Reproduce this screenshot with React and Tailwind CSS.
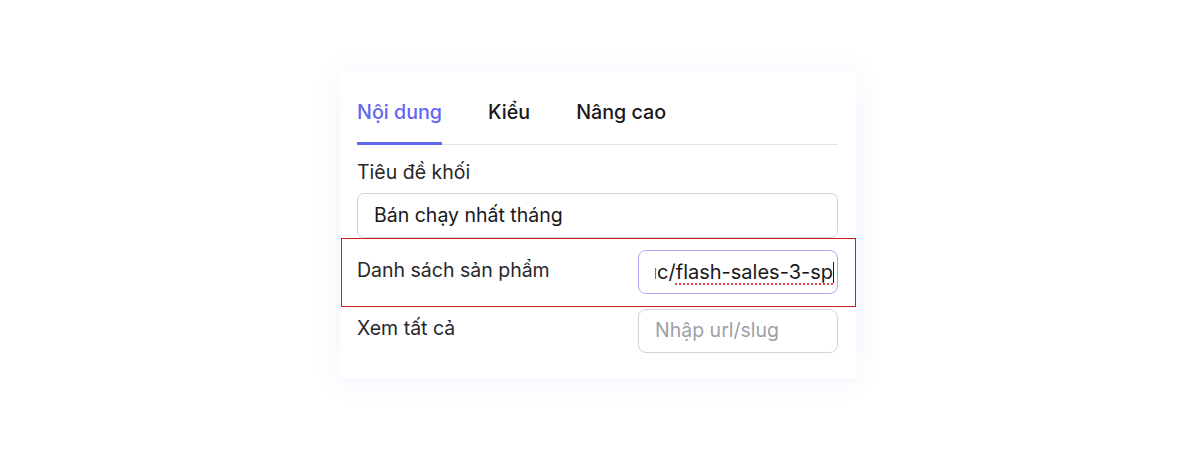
import React from 'react';

const tabs = ['Nội dung', 'Kiểu', 'Nâng cao'];

const App = () => {
    return (
        <div className="min-h-[451px] w-full bg-white flex justify-center pt-[72px] pr-[4px]" style={{ fontFamily: 'Inter, "Noto Sans", sans-serif' }}>
            <div className="w-[516px] h-[306px] bg-white shadow-[0_2px_28px_rgba(99,102,241,0.09)] pl-[17px] pr-[18px] pt-[25px] pb-[25px] flex flex-col">
                {/* Tabs */}
                <div className="flex gap-[46px] border-b border-zinc-200">
                    {tabs.map((tab, i) => (
                        <button
                            key={tab}
                            className={`pb-[16px] pt-[1px] text-[19.7px] leading-[28px] font-medium -mb-px border-b-[3px] ${i === 0 ? 'text-[#6366f1] border-[#6366f1]' : 'text-zinc-900 border-transparent'}`}
                        >
                            {tab}
                        </button>
                    ))}
                </div>

                {/* Block title */}
                <label className="mt-[14px] text-[19.5px] leading-[26px] text-zinc-800">Tiêu đề khối</label>
                <div className="mt-[8px] h-[45px] rounded-[7px] border border-zinc-300 flex items-center px-[16px] text-[19.5px] text-zinc-900">
                    Bán chạy nhất tháng
                </div>

                {/* Product list row */}
                <div className="-ml-[16px] -mr-[18px] pl-[15px] pr-[17px] pt-[11px] pb-[12px] border border-[#d01f1f] flex justify-between items-start">
                    <span className="pt-[7px] text-[19.5px] leading-[26px] text-zinc-800">Danh sách sản phẩm</span>
                    <div className="w-[200px] h-[44px] rounded-[8px] border-[1.5px] border-[#a9abf7] flex items-center pl-[16px] pr-[3px]">
                        <div className="flex-1 overflow-hidden flex justify-end items-center">
                            <span className="whitespace-nowrap text-[20px] text-zinc-900">
                                /danh-muc/<span className="underline decoration-dotted decoration-[#e5484d] decoration-2 underline-offset-[4px]">flash-sales-3-sp</span>
                            </span>
                            <span className="w-px h-[21px] bg-zinc-900 shrink-0" />
                        </div>
                    </div>
                </div>

                {/* View all row */}
                <div className="mt-[2px] flex justify-between items-start">
                    <span className="pt-[6px] text-[19.5px] leading-[26px] text-zinc-800">Xem tất cả</span>
                    <div className="w-[200px] h-[44px] rounded-[8px] border border-zinc-300 flex items-center px-[16px] text-[19.5px] text-zinc-400">
                        Nhập url/slug
                    </div>
                </div>
            </div>
        </div>
    );
};

export default App;
